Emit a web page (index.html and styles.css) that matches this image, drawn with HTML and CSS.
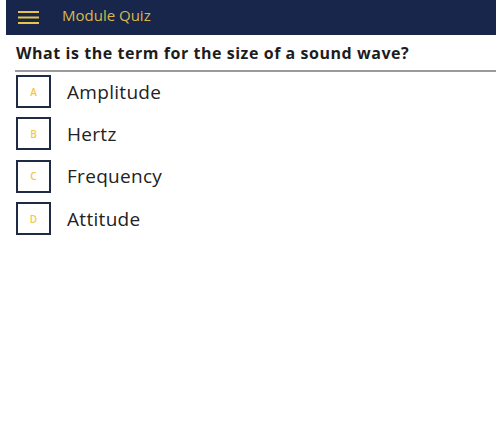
FILE: index.html
```html
<!doctype html>
<html lang="en">
  <head>
    <meta charset="UTF-8" />
    <meta name="viewport" content="width=device-width, initial-scale=1.0" />
    <title>Module Quiz</title>
    <link rel="stylesheet" href="styles.css">
  </head>
  <body>
    <header class="topbar">
      <button class="menu-btn" aria-label="Menu">
        <svg width="21" height="13" viewBox="0 0 21 13">
          <rect x="0" y="0" width="21" height="2" fill="#e8c547" />
          <rect x="0" y="5.5" width="21" height="2" fill="#e8c547" />
          <rect x="0" y="11" width="21" height="2" fill="#e8c547" />
        </svg>
      </button>
      <span class="topbar-title">Module Quiz</span>
    </header>

    <main class="quiz">
      <h2 class="question">What is the term for the size of a sound wave?</h2>
      <ul class="answers">
        <li class="answer"><span class="answer-key">A</span><span class="answer-text">Amplitude</span></li>
        <li class="answer"><span class="answer-key">B</span><span class="answer-text">Hertz</span></li>
        <li class="answer"><span class="answer-key">C</span><span class="answer-text">Frequency</span></li>
        <li class="answer"><span class="answer-key">D</span><span class="answer-text">Attitude</span></li>
      </ul>
    </main>
  </body>
</html>
```

FILE: styles.css
```css
body {
  margin: 0;
  font-family: "Open Sans", "Liberation Sans", sans-serif;
  background: #fff;
  color: #222;
}

.topbar {
  margin-left: 6px;
  height: 35px;
  background: #17264a;
  display: flex;
  align-items: center;
}

.menu-btn {
  background: none;
  border: none;
  padding: 0;
  margin-left: 12px;
  display: flex;
  align-items: center;
}

.topbar-title {
  margin-left: 23px;
  margin-top: -6px;
  color: #d9b94a;
  font-size: 15px;
}

.quiz {
  padding-left: 15px;
}

.question {
  margin: 0;
  padding: 8px 0 7px 1px;
  font-size: 16px;
  line-height: 20px;
  letter-spacing: 0.55px;
  font-weight: 700;
  color: #1d1d1d;
  border-bottom: 2px solid #9a9a9a;
}

.answers {
  list-style: none;
  margin: 0;
  padding: 3px 0 0 1px;
}

.answer {
  display: flex;
  align-items: center;
  margin-bottom: 9.4px;
}

.answer-key {
  box-sizing: border-box;
  width: 35px;
  height: 33px;
  border: 2px solid #1f2a44;
  display: flex;
  align-items: center;
  justify-content: center;
  font-size: 10px;
  font-weight: 600;
  color: #f0c84a;
}

.answer-text {
  margin-left: 16px;
  font-size: 19px;
  letter-spacing: 0.3px;
  color: #222;
}
```
